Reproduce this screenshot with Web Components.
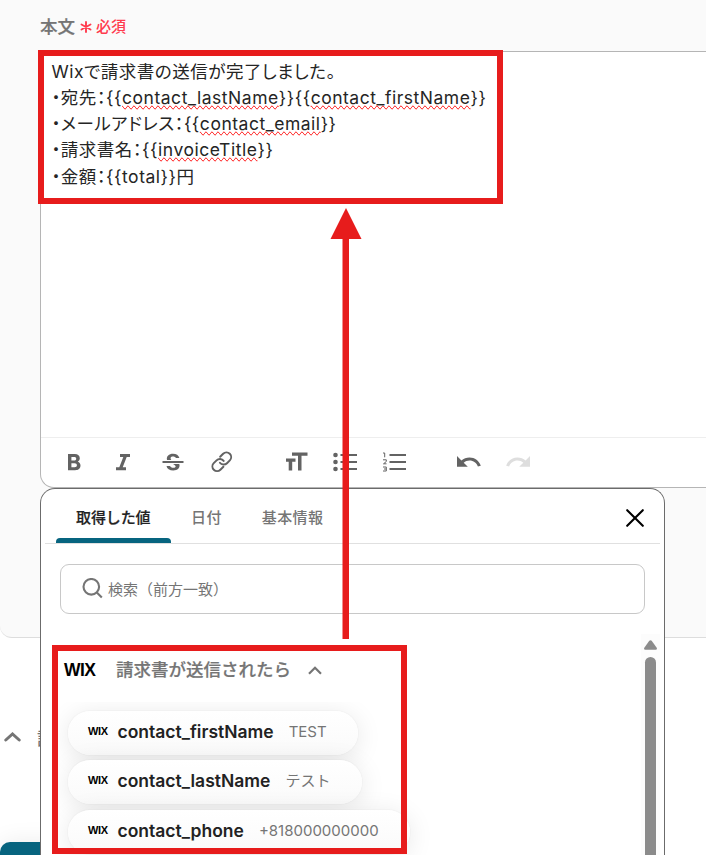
<!DOCTYPE html>
<html lang="ja">
<head>
<meta charset="utf-8">
<title>本文</title>
<style>
    html, body {
        margin: 0;
        height: 855px;
        overflow: hidden;
    }
    body {
        position: relative;
        background: #fff;
        color: #252525;
        font-family: Inter, "Noto Sans CJK JP", sans-serif;
    }
</style>
</head>
<body>
<mail-form></mail-form>
<script>
class MailForm extends HTMLElement {
    constructor() {
        super();
        this.attachShadow({ mode: 'open' });
    }

    connectedCallback() {
        this.shadowRoot.innerHTML = `
        <style>
            :host {
                display: block;
                height: 855px;
                overflow: hidden;
            }
            .section {
                box-sizing: border-box;
                height: 638px;
                padding: 14px 0 0 40px;
                background: #fafafa;
                border-bottom: 1px solid #ddd;
                border-bottom-left-radius: 12px;
            }
            u {
                text-decoration-line: spelling-error;
            }
            .below {
                display: flex;
                flex-direction: column;
                height: 217px;
            }
            .row {
                display: flex;
                align-items: center;
                gap: 16px;
                flex: none;
                height: 40px;
                margin: 79px 0 85px 4px;
                color: #757575;
                font-size: 17.5px;
                font-weight: 500;
            }
            .row svg {
                display: block;
            }
            .save {
                width: 200px;
                height: 48px;
                flex: none;
                border-radius: 10px;
                background: #07647f;
                box-shadow: 0 0 24px rgba(0, 0, 0, 0.08);
            }
            value-picker {
                position: absolute;
                left: 40px;
                top: 488px;
            }
            mark-box {
                position: absolute;
            }
            mark-box.text {
                left: 38px;
                top: 50px;
                width: 465px;
                height: 154px;
            }
            mark-box.list {
                left: 52px;
                top: 645px;
                width: 355px;
                height: 209px;
            }
            .arrow {
                position: absolute;
                left: 330px;
                top: 208px;
            }
        </style>
        <div class="section">
            <field-label>本文</field-label>
            <text-editor>
                <div>Wixで請求書の送信が完了しました。</div>
                <div>・宛先：{{<u>contact_lastName</u>}}{{<u>contact_firstName</u>}}</div>
                <div>・メールアドレス：{{<u>contact_email</u>}}</div>
                <div>・請求書名：{{<u>invoiceTitle</u>}}</div>
                <div>・金額：{{total}}円</div>
            </text-editor>
        </div>
        <div class="below">
            <div class="row">
                <svg width="17" height="10" viewBox="0 0 17 10" fill="none" stroke="#757575" stroke-width="3" stroke-linecap="round"><path d="M1.800 8 8.500 2l6.700 6"/></svg>
                <span>請</span>
            </div>
            <div class="save"></div>
        </div>
        <value-picker></value-picker>
        <mark-box class="text"></mark-box>
        <mark-box class="list"></mark-box>
        <svg class="arrow" width="32" height="431" viewBox="0 0 32 431" fill="#e71c1c"><path d="M16 0 31.500 31H19v400h-6.500V31H.5z"/></svg>
        `;
    }
}

class FieldLabel extends HTMLElement {
    constructor() {
        super();
        this.attachShadow({ mode: 'open' });
        this.shadowRoot.innerHTML = `
        <style>
            :host {
                display: flex;
                align-items: center;
                height: 22px;
                margin-bottom: 15px;
                color: #757575;
                font-size: 17.5px;
                font-weight: 500;
                -webkit-text-stroke: 0.2px currentColor;
            }
            .required {
                display: flex;
                align-items: center;
                gap: 4px;
                margin-left: 5px;
                color: #ff3b4e;
                font-size: 15px;
                -webkit-text-stroke: 0;
            }
            svg {
                margin-top: 4px;
            }
        </style>
        <slot></slot>
        <span class="required">
            <svg width="12" height="12" viewBox="0 0 12 12" stroke="#ff3b4e" stroke-width="1.900" stroke-linecap="round"><path d="M6 1v10M1.500 3.500l9 5M10.500 3.500l-9 5"/></svg>
            必須
        </span>
        `;
    }
}

class TextEditor extends HTMLElement {
    constructor() {
        super();
        this.attachShadow({ mode: 'open' });
        this.shadowRoot.innerHTML = `
        <style>
            :host {
                display: flex;
                flex-direction: column;
                box-sizing: border-box;
                height: 437px;
                border: 1px solid #b5b5b5;
                border-right: 0;
                border-radius: 0 0 0 14px;
                background: #fff;
            }
            .content {
                flex: 1;
                padding: 6.600px 10.500px;
                font-size: 17.5px;
                line-height: 26.250px;
                letter-spacing: 0.520px;
                font-feature-settings: "palt";
            }
            ::slotted(div) {
                height: 26.250px;
                white-space: nowrap;
            }
            .toolbar {
                display: flex;
                align-items: center;
                height: 49px;
                border-top: 1px solid #eee;
            }
            svg {
                display: block;
                flex: none;
                fill: #636363;
            }
        </style>
        <div class="content"><slot></slot></div>
        <div class="toolbar">
            <svg width="245" height="49" viewBox="41 438 245 49">
                <path fill-rule="evenodd" d="M68 454h6.800c3.200 0 5 1.700 5 4.300 0 1.600-.8 2.800-2 3.400 1.700.6 2.700 1.900 2.700 3.800 0 3-2.100 4.700-5.400 4.700H68zm3.400 2.900v3.500h2.800c1.300 0 2-.6 2-1.750s-.7-1.750-2-1.750zm0 6.300v4h3.200c1.500 0 2.300-.7 2.300-2s-.8-2-2.300-2z"/>
                <path d="M120 454h10v3h-3.300l-4 10.200h3.300v3h-10v-3h3.300l4-10.200H120z"/>
                <path d="M162.500 461h21v2h-21z"/>
                <path d="M167 460c-.8-3.700 2-6.200 6-6.200 3.300 0 5.700 1.500 6.400 4.200h-3.500c-.5-1-1.500-1.500-2.900-1.500-2.200 0-3.200 1.500-1.700 3.500zM173 464h6.300c1.200 3.700-1.800 6.500-6 6.500-3.800 0-6.200-1.700-6.800-4.500h3.600c.4 1.200 1.600 1.800 3.200 1.800 2.800 0 3.600-1.800-.3-3.800z"/>
                <g fill="none" stroke="#636363" stroke-width="2.100" stroke-linecap="round" transform="translate(210.500 450.500) scale(.94)">
                    <path d="M10 13a5 5 0 0 0 7.540.54l3-3a5 5 0 0 0-7.070-7.070l-3.200 3.200"/>
                    <path d="M14 11a5 5 0 0 0-7.540-.54l-3 3a5 5 0 0 0 7.070 7.070l3.200-3.200"/>
                </g>
            </svg>
            <svg width="250" height="49" viewBox="286 438 250 49">
                <path d="M292 452.500h15.500v3.300h-6v14.700h-3.500v-14.700h-6zM285.500 458.500h10v3.300h-3.300v8.700h-3.500v-8.700h-3.200z"/>
                <circle cx="335.500" cy="455" r="2.300"/><circle cx="335.500" cy="462" r="2.300"/><circle cx="335.500" cy="469" r="2.300"/>
                <path d="M340.500 454h16.500v2h-16.500zM340.500 461h16.500v2h-16.500zM340.500 468h16.500v2h-16.500zM389.500 454H406v2h-16.500zM389.500 461H406v2h-16.500zM389.500 468H406v2h-16.500z"/>
                <path fill="none" stroke="#636363" stroke-width="1" d="M383 453h1.700v4.300M383 459.800h3.300v1.700l-2.800 2.300h3M383 467h3.300v4H383M384 469h2.300"/>
                <path d="M457 456v10.800h10.800l-4.100-4.100c1.600-1.300 3.600-2.100 5.800-2.100 3.900 0 7.200 2.500 8.400 6l2.900-.9c-1.600-4.800-6-8.300-11.300-8.300-3.100 0-5.900 1.200-8.100 3z"/>
                <path fill="#dedede" d="M530 456v10.800h-10.800l4.100-4.100c-1.600-1.300-3.600-2.100-5.800-2.100-3.900 0-7.200 2.500-8.400 6l-2.900-.9c1.600-4.800 6-8.300 11.300-8.300 3.100 0 5.900 1.200 8.100 3z"/>
            </svg>
        </div>
        `;
    }
}

class ValuePicker extends HTMLElement {
    constructor() {
        super();
        this.attachShadow({ mode: 'open' });
    }

    connectedCallback() {
        this.shadowRoot.innerHTML = `
        <style>
            :host {
                display: block;
                box-sizing: border-box;
                width: 625px;
                height: 367px;
                border: 1px solid #6b6b6b;
                border-bottom: 0;
                border-radius: 15px 15px 0 0;
                background: #fff;
                overflow: hidden;
            }
            .tabs {
                display: flex;
                align-items: stretch;
                box-sizing: border-box;
                height: 55px;
                margin: 0 4px;
                padding-left: 11px;
                border-bottom: 1px solid #e0e0e0;
            }
            .tab {
                box-sizing: border-box;
                padding: 17px 20px 0;
                color: #757575;
                font-size: 15px;
                font-weight: 500;
                line-height: 23px;
                letter-spacing: 0.400px;
                white-space: nowrap;
            }
            .tab.active {
                position: relative;
                width: 115px;
                color: #222;
                letter-spacing: -0.100px;
                -webkit-text-stroke: 0.2px currentColor;
            }
            .tab.active::after {
                content: "";
                position: absolute;
                left: 0;
                bottom: 0;
                width: 115px;
                height: 5px;
                border-radius: 4px 4px 0 0;
                background: #07647f;
            }
            .close {
                margin: 20px 16px 0 auto;
            }
            .search {
                display: flex;
                align-items: center;
                gap: 5px;
                box-sizing: border-box;
                width: 585px;
                height: 50px;
                margin: 20px 0 0 19px;
                padding: 0 0 2px 21px;
                border: 1px solid #c8c8c8;
                border-radius: 9px;
                color: #757575;
                font-size: 15px;
            }
            .body {
                display: flex;
                justify-content: space-between;
                height: 242px;
                padding-top: 20px;
                margin-right: 4px;
            }
            .values {
                width: 560px;
                padding-left: 14px;
            }
            .group {
                display: flex;
                align-items: center;
                box-sizing: border-box;
                height: 68px;
                padding: 2px 0 0 9px;
                color: #757575;
                font-size: 17.5px;
                font-weight: 500;
            }
            .group wix-logo {
                margin-top: 4px;
            }
            .group .name {
                margin: 0 17px 2px 20px;
                -webkit-text-stroke: 0.2px currentColor;
            }
            .group svg {
                margin-top: 2px;
            }
            .chips {
                display: flex;
                flex-direction: column;
                align-items: flex-start;
                gap: 5px;
                height: 154px;
                padding: 9px 0 0 13px;
                overflow: hidden;
            }
            .scroll {
                display: flex;
                flex-direction: column;
                align-items: center;
                gap: 7px;
                box-sizing: border-box;
                width: 19px;
                padding-top: 6px;
                background: #fcfcfc;
            }
            .scroll svg {
                flex: none;
            }
            .thumb {
                width: 11px;
                height: 300px;
                flex: none;
                border-radius: 6px;
                background: #8b8b8b;
            }
        </style>
        <div class="tabs">
            <div class="tab active">取得した値</div>
            <div class="tab">日付</div>
            <div class="tab">基本情報</div>
            <svg class="close" width="18" height="18" viewBox="0 0 18 18" stroke="#000" stroke-width="2.100" stroke-linecap="round"><path d="M1.200 1.200l15.600 15.600M16.800 1.200 1.200 16.800"/></svg>
        </div>
        <div class="search">
            <svg width="21" height="21" viewBox="0 0 21 21" fill="none" stroke="#757575" stroke-width="2.100"><circle cx="9.300" cy="8.800" r="7.800"/><path d="m14.800 14.400 5 5"/></svg>
            <span>検索（前方一致）</span>
        </div>
        <div class="body">
            <div class="values">
                <div class="group">
                    <wix-logo style="--size: 17.5px; --width: 32px"></wix-logo>
                    <span class="name">請求書が送信されたら</span>
                    <svg width="14" height="9" viewBox="0 0 14 9" fill="none" stroke="#757575" stroke-width="2.200"><path d="m1 7.800 6-6 6 6"/></svg>
                </div>
                <div class="chips">
                    <value-chip style="width: 290px" sample="TEST">contact_firstName</value-chip>
                    <value-chip style="width: 294px" sample="テスト">contact_lastName</value-chip>
                    <value-chip style="width: 342px; margin-top: 1px" sample="+818000000000">contact_phone</value-chip>
                </div>
            </div>
            <div class="scroll">
                <svg width="13" height="10" viewBox="0 0 13 10" fill="#8b8b8b"><path d="M5.300.8q1.200-1.300 2.400 0l5 7q.8 1.900-1 1.900H1.300q-1.800 0-1-1.900z"/></svg>
                <div class="thumb"></div>
            </div>
        </div>
        `;
    }
}

class ValueChip extends HTMLElement {
    constructor() {
        super();
        this.attachShadow({ mode: 'open' });
    }

    connectedCallback() {
        this.shadowRoot.innerHTML = `
        <style>
            :host {
                display: flex;
                align-items: center;
                box-sizing: border-box;
                height: 44px;
                flex: none;
                padding: 0 0 3px 20px;
                border-radius: 22px;
                background: linear-gradient(#fff, #fafafa);
                box-shadow: 0 4px 26px rgba(0, 0, 0, 0.1), 0 0 2px rgba(0, 0, 0, 0.07);
                color: #222;
                font-size: 17.5px;
                font-weight: 600;
                white-space: nowrap;
            }
            .sample {
                margin-left: 15px;
                color: #757575;
                font-size: 15px;
                font-weight: 400;
                line-height: 20px;
            }
        </style>
        <wix-logo style="--size: 11px; --width: 20px; margin-right: 9.500px"></wix-logo>
        <slot></slot>
        <span class="sample">${this.getAttribute('sample')}</span>
        `;
    }
}

class WixLogo extends HTMLElement {
    constructor() {
        super();
        this.attachShadow({ mode: 'open' });
        this.shadowRoot.innerHTML = `
        <style>
            :host {
                display: block;
                width: var(--width);
                color: #000;
                font: 700 var(--size)/1 "Liberation Sans", sans-serif;
                letter-spacing: -0.030em;
                white-space: nowrap;
            }
        </style>
        WIX
        `;
    }
}

class MarkBox extends HTMLElement {
    constructor() {
        super();
        this.attachShadow({ mode: 'open' });
        this.shadowRoot.innerHTML = `
        <style>
            :host {
                display: block;
                box-sizing: border-box;
                border: 6px solid #e71c1c;
            }
        </style>
        `;
    }
}

customElements.define('wix-logo', WixLogo);
customElements.define('value-chip', ValueChip);
customElements.define('value-picker', ValuePicker);
customElements.define('field-label', FieldLabel);
customElements.define('text-editor', TextEditor);
customElements.define('mark-box', MarkBox);
customElements.define('mail-form', MailForm);
</script>
</body>
</html>
